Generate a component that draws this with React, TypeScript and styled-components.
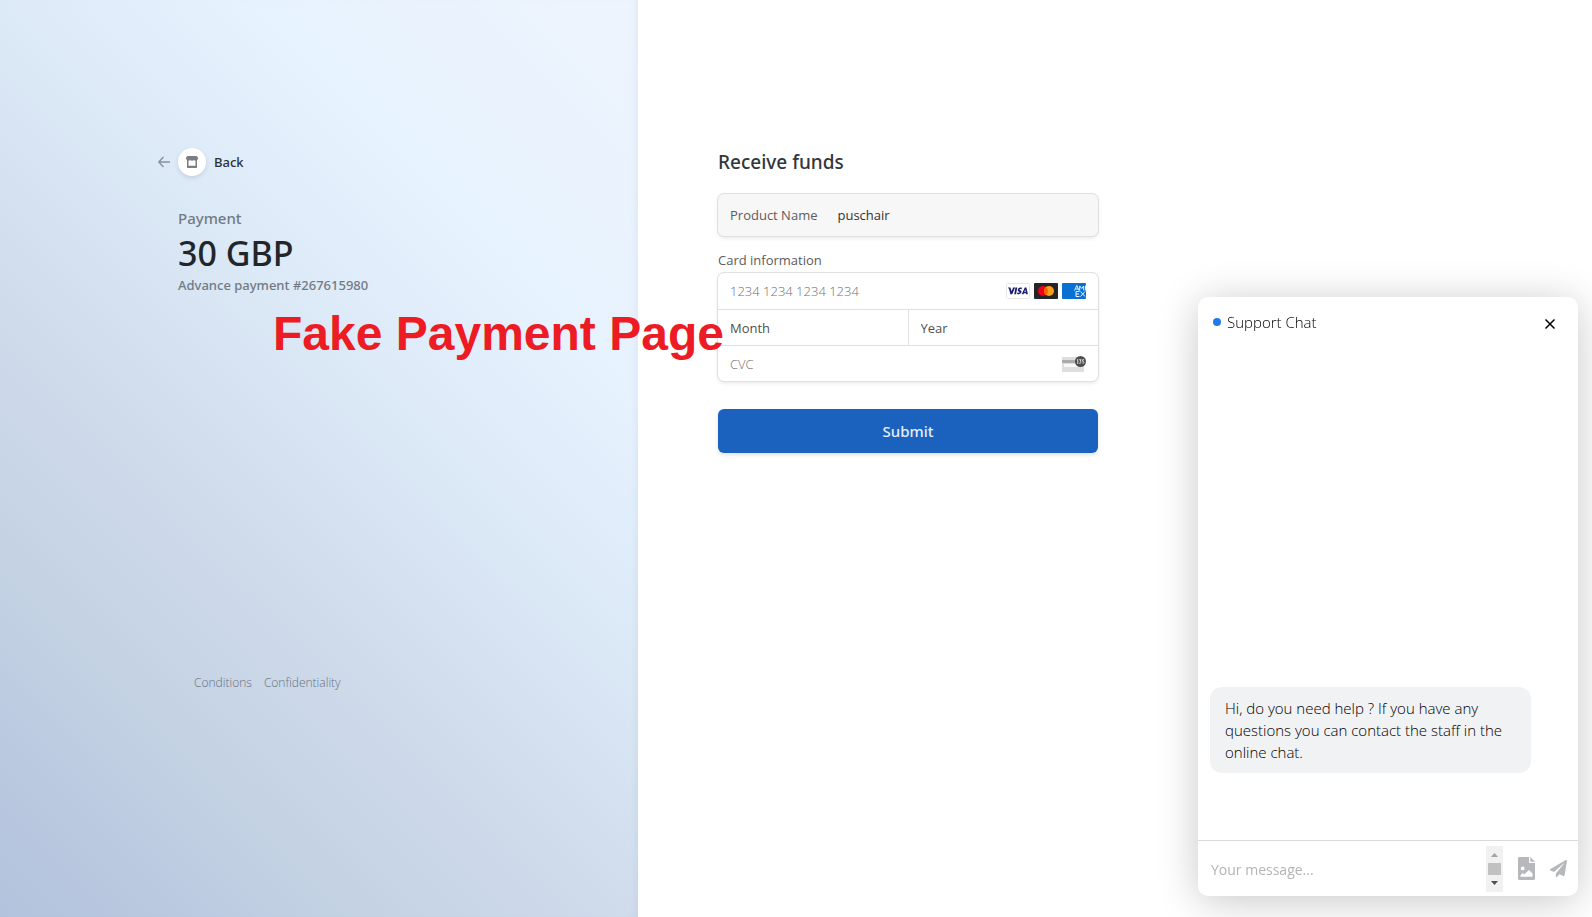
import React from "react";
import styled, { createGlobalStyle } from "styled-components";
import { FaPaperPlane } from "react-icons/fa";

const Global = createGlobalStyle`
  * { box-sizing: border-box; }
  body { margin: 0; background: #fff; font-family: "Open Sans", "Noto Sans", sans-serif; color: #1a1a1a; }
  button, input, select, textarea { font-family: inherit; }
  h1, h2, p { margin: 0; font-weight: inherit; }
`;

const mediumFont = `
  font-family: "Noto Sans", "Open Sans", sans-serif;
  font-weight: 500;
`;

const Page = styled.div`
  display: grid;
  grid-template-columns: 638fr 954fr;
  min-height: 100vh;
`;

const Summary = styled.section`
  display: flex;
  flex-direction: column;
  align-items: flex-end;
  padding: 148px 80px 0 0;
  background: linear-gradient(45deg, #b4c3dd 0%, #b9c8df 10%, #c1d0e2 20%, #cedaea 38%, #dbe8f6 57%, #e6f2fe 74%, #eef4fd 100%);
  box-shadow: inset -6px 0 8px -6px rgba(60, 90, 130, 0.1);
`;

const SummaryBody = styled.div`
  display: flex;
  flex-direction: column;
  width: 100%;
  max-width: 380px;
  height: 544px;
`;

const BackLink = styled.a`
  ${mediumFont}
  display: flex;
  align-items: center;
  gap: 8px;
  height: 28px;
  margin: 0 0 30px -20px;
  color: #2c3138;
  font-size: 13px;
  text-decoration: none;
`;

const ShopBadge = styled.span`
  display: flex;
  align-items: center;
  justify-content: center;
  width: 28px;
  height: 28px;
  border-radius: 50%;
  background: #fff;
  box-shadow: 0 2px 4px rgba(60, 80, 120, 0.16);
`;

const Kind = styled.p`
  ${mediumFont}
  color: #727a84;
  font-size: 15px;
  line-height: 24px;
`;

const Amount = styled.h1`
  ${mediumFont}
  color: #22262b;
  font-size: 34px;
  line-height: 46px;
`;

const Reference = styled.p`
  ${mediumFont}
  color: #727a84;
  font-size: 13px;
  line-height: 18px;
`;

const FooterLinks = styled.nav`
  display: flex;
  gap: 12px;
  margin-top: auto;
  padding-left: 16px;
  font-size: 12px;
  font-weight: 300;
  line-height: 18px;

  a { color: #66707f; text-decoration: none; }
`;

const Checkout = styled.main`
  padding: 148px 0 40px 80px;
`;

const Form = styled.form`
  display: flex;
  flex-direction: column;
  width: 100%;
  max-width: 380px;
`;

const Title = styled.h2`
  ${mediumFont}
  margin-bottom: 18px;
  color: #33363a;
  font-size: 19px;
  line-height: 28px;
`;

const frame = `
  border-radius: 6px;
  box-shadow: 0 0 0 1px #e0e0e0, 0 2px 4px rgba(0, 0, 0, 0.1);
`;

const ProductField = styled.label`
  ${frame}
  display: flex;
  align-items: center;
  gap: 20px;
  height: 42px;
  padding: 0 12px;
  background: #f7f7f7;
  color: #5c5c5c;
  font-size: 13px;
`;

const CardGroup = styled.fieldset`
  min-width: 0;
  margin: 15px 0 28px;
  padding: 0;
  border: 0;
`;

const CardLegend = styled.legend`
  padding: 0;
  margin-bottom: 4px;
  color: #5c5c5c;
  font-size: 13px;
  line-height: 18px;
`;

const CardBox = styled.div`
  ${frame}
  background: #fff;
`;

const CardRow = styled.div`
  display: flex;
  align-items: center;
  height: 36px;

  & + & { border-top: 1px solid #e0e0e0; }
`;

const Field = styled.input`
  flex: 1;
  min-width: 0;
  height: 100%;
  padding: 0 12px;
  border: 0;
  outline: 0;
  background: transparent;
  color: #4a4a4a;
  font-size: 13px;
  font-weight: 300;

  &::placeholder { color: #707070; opacity: 1; }
`;

const ProductInput = styled(Field)`
  padding: 0;
  color: #333;
  font-weight: 400;
`;

const Select = styled.select`
  flex: 1;
  height: 100%;
  padding: 0 12px;
  border: 0;
  outline: 0;
  appearance: none;
  background: transparent;
  color: #4f4f4f;
  font-size: 13px;

  & + & { border-left: 1px solid #e0e0e0; }
`;

const Brands = styled.div`
  display: flex;
  gap: 4px;
  padding-right: 12px;

  svg { display: block; }
`;

const Submit = styled.button`
  ${mediumFont}
  height: 44px;
  border: 0;
  border-radius: 6px;
  background: #1b62bf;
  box-shadow: 0 2px 4px rgba(0, 0, 0, 0.12);
  color: #e4eefc;
  font-size: 15px;
`;

const Stamp = styled.p`
  position: absolute;
  top: 306px;
  left: 273px;
  color: #ed1c24;
  font-family: "Liberation Sans", Arial, sans-serif;
  font-size: 48px;
  font-weight: 700;
  line-height: 56px;
  white-space: nowrap;
  pointer-events: none;
`;

const Chat = styled.aside`
  position: fixed;
  right: 14px;
  bottom: 21px;
  display: flex;
  flex-direction: column;
  width: 380px;
  height: 599px;
  border-radius: 10px;
  background: #fff;
  box-shadow: 0 5px 40px rgba(0, 0, 0, 0.22);
  overflow: hidden;
`;

const ChatHeader = styled.header`
  display: flex;
  align-items: center;
  gap: 6px;
  height: 50px;
  padding: 0 20px 0 15px;
  color: #000;
  font-size: 15px;
  font-weight: 300;
`;

const Dot = styled.span`
  width: 8px;
  height: 8px;
  border-radius: 50%;
  background: #1f7be8;
`;

const IconButton = styled.button`
  display: flex;
  align-items: center;
  justify-content: center;
  padding: 0;
  border: 0;
  background: transparent;
  color: #b7b8bb;

  svg { display: block; }
`;

const CloseButton = styled(IconButton)`
  width: 16px;
  height: 16px;
  margin: 4px 0 0 auto;
  color: #000;
`;

const Messages = styled.div`
  display: flex;
  flex: 1;
  flex-direction: column;
  justify-content: flex-end;
  padding: 0 12px 67px;
`;

const Bubble = styled.p`
  max-width: 321px;
  padding: 10px 15px;
  border-radius: 12px;
  background: #f1f2f4;
  color: #000;
  font-size: 15px;
  font-weight: 300;
  line-height: 22px;
`;

const Composer = styled.form`
  display: flex;
  align-items: center;
  height: 56px;
  padding-right: 11px;
  border-top: 1px solid #d9d9d9;
`;

const MessageInput = styled.textarea`
  flex: 1;
  min-width: 0;
  height: 24px;
  padding: 2px 0 0 13px;
  border: 0;
  outline: 0;
  resize: none;
  overflow: hidden;
  background: transparent;
  font-size: 14px;
  line-height: 22px;

  &::placeholder { color: #b4b4b4; opacity: 1; }
`;

const Tools = styled.div`
  display: flex;
  align-items: center;
  gap: 15px;
`;

const VisaIcon = () => (
  <svg width="24" height="16" viewBox="0 0 24 16" role="img" aria-label="Visa">
    <rect x="0.5" y="0.5" width="23" height="15" rx="1" fill="#fff" stroke="#e6e6ea" />
    <path fill="#1c1a6e" d="M2 4.6h2.4l1.1 3.7 1.7-3.7h1.9L6.2 11.2H4.4L3.2 6.4C3.1 5.9 2.7 5.3 2 5zM9.4 4.6h1.8l-1.1 6.6H8.3zM15.9 4.8l-.3 1.5c-.9-.4-2-.4-2.1.1 0 .6 2 .7 2 2.4 0 1.9-2.2 2.8-4.4 2.2l.3-1.6c1 .5 2.2.5 2.3-.1 0-.7-2-.8-2-2.4 0-2 2.300-2.900 4.200-2.100zM18.800 4.600h1.600l1.500 6.600h-1.700l-.2-.9h-2.100l-.4.9h-1.800zM19.200 6.600l-.8 2.300h1.300z" />
  </svg>
);

const MastercardIcon = () => (
  <svg width="24" height="16" viewBox="0 0 24 16" role="img" aria-label="Mastercard">
    <rect width="24" height="16" rx="1" fill="#252525" />
    <circle cx="9" cy="8" r="5" fill="#eb001b" />
    <circle cx="15" cy="8" r="5" fill="#f79e1b" />
    <path d="M12 4a5 5 0 0 1 0 8 5 5 0 0 1 0-8z" fill="#ff5f00" />
  </svg>
);

const AmexIcon = () => (
  <svg width="24" height="16" viewBox="0 0 24 16" role="img" aria-label="American Express">
    <rect width="24" height="16" rx="1" fill="#0a6fd3" />
    <g fill="none" stroke="#eaf4ff" strokeWidth="1">
      <path d="M12.500 7.500l2.300-5 2.200 5M13.500 6h2.800M17.700 7.500V3l2 2.500 2-2.500v4.500M23.500 2.500v5" />
      <path d="M17.500 8.500h-3.500v5h3.500M14 11h3M18.500 8.500l4.500 5M23 8.500l-4.500 5" />
    </g>
  </svg>
);

const CvcIcon = () => (
  <svg width="24" height="16" viewBox="0 0 24 16" role="img" aria-label="Security code">
    <rect y="1" width="22" height="15" rx="1" fill="#dedede" />
    <rect y="4" width="22" height="3" fill="#ababab" />
    <rect x="2" y="8" width="18" height="3" fill="#f8f8f8" />
    <circle cx="18.500" cy="5.500" r="5.500" fill="#4d4d4d" />
    <path d="M15 4l.8-.5V8M17.200 3.700h1.900l-1 1.500c1.500 0 1.300 2.500-.9 2M22 3.700h-1.400v1.600c1.900-.2 1.700 2.500-.1 2" fill="none" stroke="#fff" strokeWidth="0.800" />
  </svg>
);

const ArrowIcon = () => (
  <svg width="12" height="12" viewBox="0 0 12 12" aria-hidden="true">
    <path d="M12 6H1M5.500 1L.8 6l4.700 5" fill="none" stroke="#8b929b" strokeWidth="1.400" />
  </svg>
);

const ShopIcon = () => (
  <svg width="12" height="12" viewBox="0 0 12 12" aria-hidden="true">
    <path
      fillRule="evenodd"
      fill="#7c7d80"
      d="M2 0h8c1.200 0 2 1.200 2 2.500 0 .8-.4 1.300-1 1.600V11c0 .6-.4 1-1 1H2c-.6 0-1-.4-1-1V4.100C.4 3.800 0 3.300 0 2.500 0 1.200.8 0 2 0zM2.500 4.800v4.900h7V4.800C8.800 4.800 8.300 4.500 8 4.100c-.9.700-3.100.7-4 0-.3.400-.8.700-1.500.7z"
    />
  </svg>
);

const CloseIcon = () => (
  <svg width="10" height="10" viewBox="0 0 10 10" aria-hidden="true">
    <path d="M.5.500l9 9M9.500.500l-9 9" stroke="currentColor" strokeWidth="1.500" />
  </svg>
);

const ScrollIcon = () => (
  <svg width="17" height="46" viewBox="0 0 17 46" aria-hidden="true">
    <rect width="17" height="46" fill="#f1f1f1" />
    <path d="M5 11l3.500-4 3.500 4z" fill="#a3a3a3" />
    <rect x="2" y="17" width="13" height="12" fill="#c1c1c1" />
    <path d="M5 35l3.500 4 3.500-4z" fill="#505050" />
  </svg>
);

const FileImageIcon = () => (
  <svg width="17" height="23" viewBox="0 0 17 23" aria-hidden="true">
    <path
      fillRule="evenodd"
      fill="currentColor"
      d="M1.500 0H11v6h6v15.500c0 .9-.6 1.500-1.500 1.500h-14C.6 23 0 22.400 0 21.500v-20C0 .6.600 0 1.500 0zM12.300 0L17 4.700h-4.700zM4.700 9.500a1.900 1.900 0 1 0 0 3.800 1.900 1.900 0 0 0 0-3.800zM2.500 19.800h12v-3.300l-3.600-3.600-4.700 4.700-1.500-1.500-2.200 2.200z"
    />
  </svg>
);

export default function App() {
  return (
    <>
      <Global />
      <Page>
        <Summary>
          <SummaryBody>
            <BackLink href="#back">
              <ArrowIcon />
              <ShopBadge><ShopIcon /></ShopBadge>
              Back
            </BackLink>
            <Kind>Payment</Kind>
            <Amount>30 GBP</Amount>
            <Reference>Advance payment #267615980</Reference>
            <FooterLinks>
              <a href="#conditions">Conditions</a>
              <a href="#confidentiality">Confidentiality</a>
            </FooterLinks>
          </SummaryBody>
        </Summary>
        <Checkout>
          <Form onSubmit={(e) => e.preventDefault()}>
            <Title>Receive funds</Title>
            <ProductField>
              Product Name
              <ProductInput defaultValue="puschair" readOnly />
            </ProductField>
            <CardGroup>
              <CardLegend>Card information</CardLegend>
              <CardBox>
                <CardRow>
                  <Field aria-label="Card number" placeholder="1234 1234 1234 1234" />
                  <Brands>
                    <VisaIcon />
                    <MastercardIcon />
                    <AmexIcon />
                  </Brands>
                </CardRow>
                <CardRow>
                  <Select aria-label="Month"><option>Month</option></Select>
                  <Select aria-label="Year"><option>Year</option></Select>
                </CardRow>
                <CardRow>
                  <Field aria-label="CVC" placeholder="CVC" />
                  <Brands><CvcIcon /></Brands>
                </CardRow>
              </CardBox>
            </CardGroup>
            <Submit type="submit">Submit</Submit>
          </Form>
        </Checkout>
      </Page>
      <Stamp>Fake Payment Page</Stamp>
      <Chat aria-label="Support Chat">
        <ChatHeader>
          <Dot />
          Support Chat
          <CloseButton type="button" aria-label="Close chat"><CloseIcon /></CloseButton>
        </ChatHeader>
        <Messages>
          <Bubble>
            Hi, do you need help ? If you have any questions you can contact the staff in the online chat.
          </Bubble>
        </Messages>
        <Composer onSubmit={(e) => e.preventDefault()}>
          <MessageInput aria-label="Your message" placeholder="Your message..." rows={1} />
          <Tools>
            <ScrollIcon />
            <IconButton type="button" aria-label="Attach image"><FileImageIcon /></IconButton>
            <IconButton type="submit" aria-label="Send"><FaPaperPlane size={17} /></IconButton>
          </Tools>
        </Composer>
      </Chat>
    </>
  );
}
